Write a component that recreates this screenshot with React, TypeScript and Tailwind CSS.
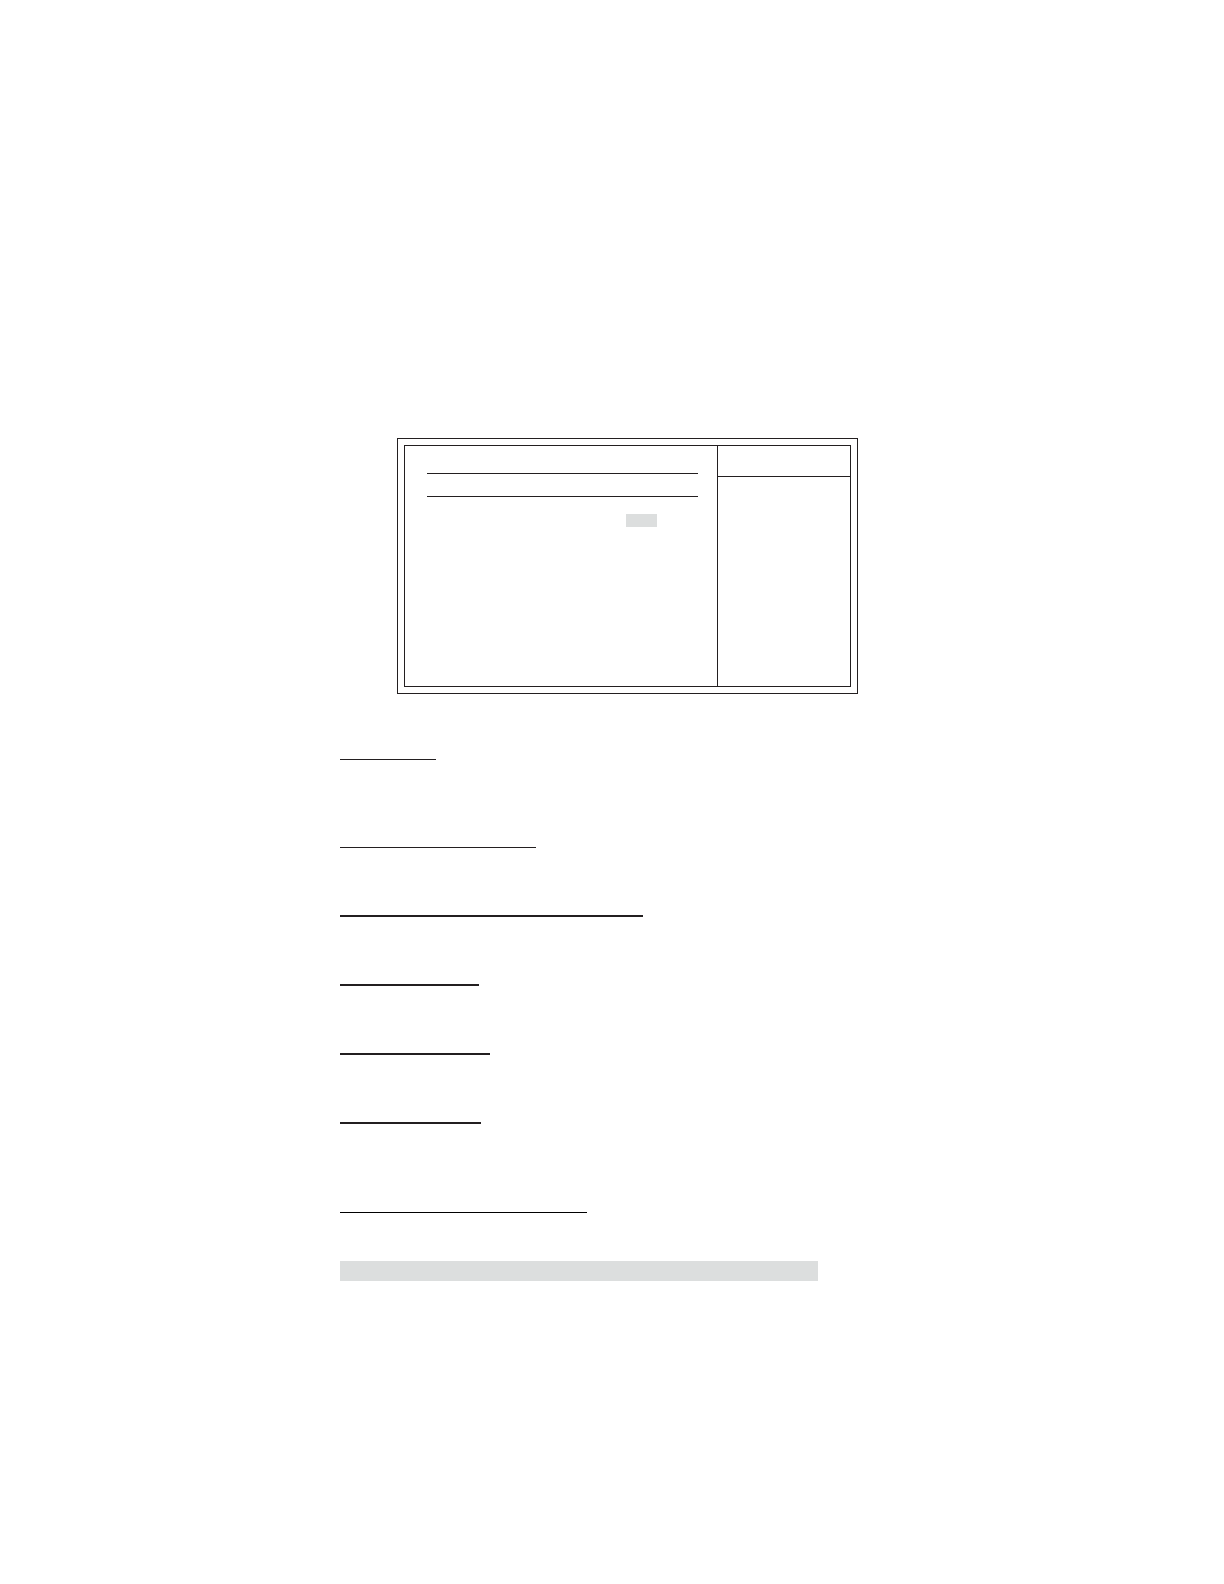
import * as React from "react"
import clsx from "clsx"

const rules = [
  "mb-[87px] max-w-[96px] border-t border-[#231f20]",
  "mb-[67px] max-w-[196px] border-t border-[#231f20]",
  "mb-[67px] max-w-[303px] border-t-2 border-[#231f20]",
  "mb-[67px] max-w-[139px] border-t-2 border-[#231f20]",
  "mb-[67px] max-w-[150px] border-t-2 border-[#231f20]",
  "mb-[88px] max-w-[141px] border-t-2 border-[#231f20]",
  "mb-12 max-w-[247px] border-t border-black",
]

function Highlight({ className }: { className: string }) {
  return <div className={clsx("bg-[#dcdede]", className)} />
}

function SetupFrame() {
  return (
    <div className="ml-[57px] max-w-[461px] border border-[#231f20] p-1.5">
      <div className="flex min-h-[242px] border border-[#231f20]">
        <div className="flex-1 pt-[27px] pr-[19px] pl-[22px]">
          <hr className="border-[#231f20]" />
          <hr className="mt-[22px] border-[#231f20]" />
          <Highlight className="mt-[17px] mr-[41px] ml-auto h-[13px] w-[31px]" />
        </div>
        <div className="w-[133px] border-l border-[#231f20]">
          <div className="h-[31px] border-b border-[#231f20]" />
        </div>
      </div>
    </div>
  )
}

export default function App() {
  return (
    <div className="min-h-screen bg-white">
      <main className="mx-auto max-w-[544px] pt-[438px]">
        <SetupFrame />

        <div className="mt-[65px]">
          {rules.map((rule) => (
            <hr key={rule} className={rule} />
          ))}
          <Highlight className="h-5 max-w-[478px]" />
        </div>
      </main>
    </div>
  )
}
